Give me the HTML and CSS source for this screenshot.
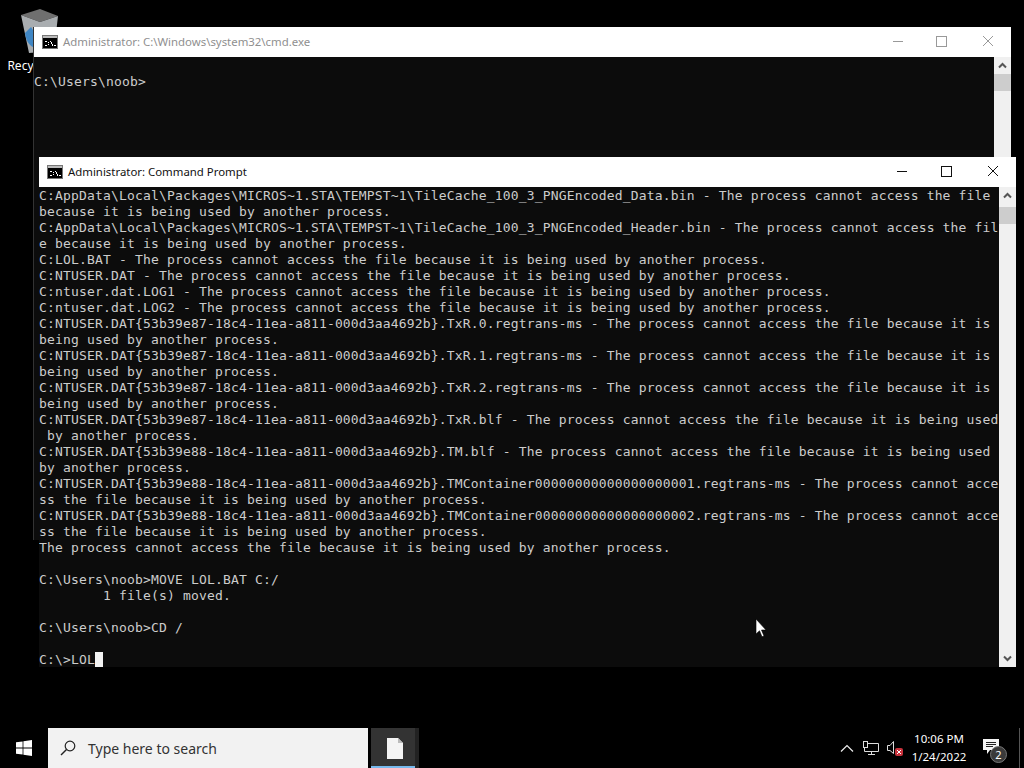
FILE: index.html
```html
<!DOCTYPE html>
<html lang="en">
<head>
<meta charset="utf-8">
<title>Command Prompt</title>
<link rel="stylesheet" href="styles.css">
</head>
<body>
<div class="desktop">
  <div class="recycle">
    <svg class="bin" width="40" height="44" viewBox="0 0 40 44">
      <path d="M2 6 L21 0 L39 7 L21 13 Z" fill="#6f6f6f"/>
      <path d="M2 6 L21 13 L39 7 L35 42 L10 44 Z" fill="#a9adb0"/>
      <path d="M6 24 C7 32 10 36 14 38 L16 24 L12 18 Z" fill="#3f86c4"/>
    </svg>
    <span class="recycle-label">Recycle Bin</span>
  </div>

  <section class="window back">
    <header class="titlebar inactive">
      <svg class="cmd-icon" width="16" height="14" viewBox="0 0 16 14"><rect x=".5" y=".5" width="15" height="13" fill="#000" stroke="#777"/><rect x="1" y="1" width="14" height="2" fill="#bbb"/><path d="M3 6h2v1H3v3h2v1H3zM6 7h1v1H6zM6 9h1v1H6zM8 6h1v1h1v2h1v2h-1V9H9V7H8zM12 10h2v1h-2z" fill="#fff"/></svg>
      <span class="title">Administrator: C:\Windows\system32\cmd.exe</span>
      <div class="controls">
        <svg width="46" height="30" viewBox="0 0 46 30"><path d="M20 14.500h10" stroke="#999"/></svg>
        <svg width="46" height="30" viewBox="0 0 46 30"><rect x="17.500" y="9.500" width="10" height="10" fill="none" stroke="#999"/></svg>
        <svg width="46" height="30" viewBox="0 0 46 30"><path d="M18 9l10 10M28 9L18 19" stroke="#999" fill="none"/></svg>
      </div>
    </header>
    <div class="client">
      <pre class="console">C:\Users\noob&gt;</pre>
      <div class="scrollbar">
        <svg class="arrow" width="17" height="17" viewBox="0 0 17 17"><path d="M5 10.500L8.500 7l3.500 3.500" stroke="#555" stroke-width="2" fill="none"/></svg>
        <div class="thumb"></div>
      </div>
    </div>
  </section>

  <section class="window front">
    <header class="titlebar">
      <svg class="cmd-icon" width="16" height="14" viewBox="0 0 16 14"><rect x=".5" y=".5" width="15" height="13" fill="#000" stroke="#777"/><rect x="1" y="1" width="14" height="2" fill="#bbb"/><path d="M3 6h2v1H3v3h2v1H3zM6 7h1v1H6zM6 9h1v1H6zM8 6h1v1h1v2h1v2h-1V9H9V7H8zM12 10h2v1h-2z" fill="#fff"/></svg>
      <span class="title">Administrator: Command Prompt</span>
      <div class="controls">
        <svg width="46" height="30" viewBox="0 0 46 30"><path d="M19 14.500h10" stroke="#111"/></svg>
        <svg width="46" height="30" viewBox="0 0 46 30"><rect x="17.500" y="9.500" width="10" height="10" fill="none" stroke="#111"/></svg>
        <svg width="46" height="30" viewBox="0 0 46 30"><path d="M18 9l10 10M28 9L18 19" stroke="#111" fill="none"/></svg>
      </div>
    </header>
    <div class="client">
<pre class="console">C:AppData\Local\Packages\MICROS~1.STA\TEMPST~1\TileCache_100_3_PNGEncoded_Data.bin - The process cannot access the file
because it is being used by another process.
C:AppData\Local\Packages\MICROS~1.STA\TEMPST~1\TileCache_100_3_PNGEncoded_Header.bin - The process cannot access the fil
e because it is being used by another process.
C:LOL.BAT - The process cannot access the file because it is being used by another process.
C:NTUSER.DAT - The process cannot access the file because it is being used by another process.
C:ntuser.dat.LOG1 - The process cannot access the file because it is being used by another process.
C:ntuser.dat.LOG2 - The process cannot access the file because it is being used by another process.
C:NTUSER.DAT{53b39e87-18c4-11ea-a811-000d3aa4692b}.TxR.0.regtrans-ms - The process cannot access the file because it is
being used by another process.
C:NTUSER.DAT{53b39e87-18c4-11ea-a811-000d3aa4692b}.TxR.1.regtrans-ms - The process cannot access the file because it is
being used by another process.
C:NTUSER.DAT{53b39e87-18c4-11ea-a811-000d3aa4692b}.TxR.2.regtrans-ms - The process cannot access the file because it is
being used by another process.
C:NTUSER.DAT{53b39e87-18c4-11ea-a811-000d3aa4692b}.TxR.blf - The process cannot access the file because it is being used
 by another process.
C:NTUSER.DAT{53b39e88-18c4-11ea-a811-000d3aa4692b}.TM.blf - The process cannot access the file because it is being used
by another process.
C:NTUSER.DAT{53b39e88-18c4-11ea-a811-000d3aa4692b}.TMContainer00000000000000000001.regtrans-ms - The process cannot acce
ss the file because it is being used by another process.
C:NTUSER.DAT{53b39e88-18c4-11ea-a811-000d3aa4692b}.TMContainer00000000000000000002.regtrans-ms - The process cannot acce
ss the file because it is being used by another process.
The process cannot access the file because it is being used by another process.

C:\Users\noob&gt;MOVE LOL.BAT C:/
        1 file(s) moved.

C:\Users\noob&gt;CD /

C:\&gt;LOL<span class="cursor"></span></pre>
      <div class="scrollbar">
        <svg class="arrow" width="17" height="17" viewBox="0 0 17 17"><path d="M5 10.500L8.500 7l3.500 3.500" stroke="#555" stroke-width="2" fill="none"/></svg>
        <div class="thumb"></div>
        <svg class="arrow down" width="17" height="17" viewBox="0 0 17 17"><path d="M5 6.500L8.500 10l3.500-3.500" stroke="#555" stroke-width="2" fill="none"/></svg>
      </div>
    </div>
  </section>

  <svg class="pointer" width="12" height="19" viewBox="0 0 12 19"><path d="M1 0v15l3.500-3.200 2.500 6 2-.9-2.500-5.900H11z" fill="#fff" stroke="#000" stroke-width=".6"/></svg>
</div>

<footer class="taskbar">
  <div class="start">
    <svg width="16" height="16" viewBox="0 0 16 16"><path d="M0 2.300l6.600-.9v6.200H0zM7.400 1.300L16 0v7.600H7.400zM0 8.400h6.600v6.200L0 13.700zM7.400 8.400H16V16l-8.600-1.300z" fill="#fff"/></svg>
  </div>
  <div class="search">
    <svg width="16" height="16" viewBox="0 0 16 16"><circle cx="10" cy="6" r="4.800" fill="none" stroke="#222" stroke-width="1.200"/><path d="M6.500 9.500L1 15" stroke="#222" stroke-width="1.400"/></svg>
    <span>Type here to search</span>
  </div>
  <div class="task-app">
    <div class="task-tab">
      <svg width="16" height="21" viewBox="0 0 16 21"><path d="M0 0h11l5 5v16H0z" fill="#f4f4f4"/><path d="M11 0l5 5h-5z" fill="#bbb"/></svg>
    </div>
  </div>
  <div class="tray">
    <svg class="tray-up" width="14" height="8" viewBox="0 0 14 8"><path d="M1 7.500l6-6 6 6" fill="none" stroke="#eee" stroke-width="1.200"/></svg>
    <svg class="tray-net" width="16" height="14" viewBox="0 0 16 14"><rect x=".5" y=".5" width="4" height="6" fill="none" stroke="#ddd"/><path d="M4.500 2.500h11v8h-14v-4M8.500 10.500v3M5 13.500h7" fill="none" stroke="#ddd"/></svg>
    <svg class="tray-vol" width="16" height="16" viewBox="0 0 16 16"><path d="M.5 5.500h2.500l3.500-4v12l-3.500-3H.5z" fill="none" stroke="#ddd"/><rect x="8" y="8" width="8" height="8" rx="2" fill="#c8323c"/><path d="M10 10l4 4M14 10l-4 4" stroke="#fff"/></svg>
    <div class="clock"><span>10:06 PM</span><span>1/24/2022</span></div>
    <div class="notify">
      <svg width="16" height="15" viewBox="0 0 16 15"><path d="M0 0h16v11H7l-3 4v-4H0z" fill="#f5f5f5"/><path d="M3 3.500h10M3 5.500h10M3 7.500h7" stroke="#222"/></svg>
      <span class="badge">2</span>
    </div>
    <div class="show-desktop"></div>
  </div>
</footer>
</body>
</html>
```

FILE: styles.css
```css
html, body { margin: 0; height: 100%; background: #000; overflow: hidden; }
body { display: flex; flex-direction: column; font-family: "Segoe UI", "Noto Sans", "Open Sans", sans-serif; }
.desktop { position: relative; flex: 1; min-height: 0; background: #000; }

.recycle { position: absolute; left: 5px; top: 9px; width: 68px; display: flex; flex-direction: column; align-items: center; gap: 5px; color: #fff; font-size: 12px; white-space: nowrap; }
.recycle-label { line-height: 16px; }

.window { position: absolute; display: flex; flex-direction: column; }
.back { left: 34px; top: 27px; width: 977px; height: 513px; background: #0c0c0c; box-shadow: -1px 0 0 #333; }
.front { left: 39px; top: 157px; width: 977px; height: 510px; background: #0c0c0c; }

.titlebar { height: 30px; flex: none; display: flex; align-items: center; background: #fff; color: #111; font-size: 11.4px; }
.titlebar.inactive { color: #8f8f8f; }
.cmd-icon { margin-left: 8px; margin-right: 5px; flex: none; }
.title { flex: 1; white-space: nowrap; line-height: 16px; }
.controls { display: flex; flex: none; }
.controls svg { display: block; }

.client { flex: 1; min-height: 0; display: flex; }
.console { flex: 1; min-width: 0; margin: 0; overflow: hidden; padding: 1px 0 0; color: #cccccc; font-family: "DejaVu Sans Mono", monospace; font-size: 13px; letter-spacing: 0.17px; line-height: 16px; }
.back .console { padding-top: 17px; }
.scrollbar { width: 17px; flex: none; background: #f0f0f0; display: flex; flex-direction: column; }
.arrow { display: block; flex: none; }
.thumb { height: 17px; flex: none; background: #cdcdcd; }
.front .thumb { margin-top: 3px; }
.arrow.down { margin-top: auto; }
.cursor { display: inline-block; width: 8px; height: 15px; background: #f2f2f2; vertical-align: -3px; }

.pointer { position: absolute; left: 755px; top: 619px; }

.taskbar { height: 40px; flex: none; display: flex; align-items: stretch; background: #000; color: #fff; }
.start { width: 48px; display: flex; align-items: center; justify-content: center; flex: none; }
.search { width: 320px; flex: none; display: flex; align-items: center; gap: 12px; padding-left: 12px; box-sizing: border-box; background: #f2f2f2; color: #333; font-size: 14px; }
.task-app { width: 48px; margin-left: 3px; flex: none; display: flex; background: #222; }
.task-tab { width: 44px; display: flex; align-items: center; justify-content: center; background: #333; box-sizing: border-box; border-bottom: 2px solid #76b9ed; padding: 2px 0 0 4px; }
.tray { margin-left: auto; display: flex; align-items: center; }
.tray-up { margin-right: 9px; }
.tray-net { margin-right: 8px; }
.tray-vol { margin-right: 3px; }
.clock { width: 66px; display: flex; flex-direction: column; align-items: center; font-size: 11.5px; line-height: 18px; }
.notify { position: relative; width: 40px; height: 40px; box-sizing: border-box; padding: 0 2px 3px 0; display: flex; align-items: center; justify-content: center; margin-right: 7px; }
.badge { position: absolute; right: 5px; bottom: 5px; width: 15px; height: 15px; border-radius: 50%; background: #3a3a3a; border: 1px solid #777; font-size: 11px; line-height: 15px; text-align: center; }
.show-desktop { width: 5px; height: 40px; box-sizing: border-box; border-left: 1px solid #555; }
```
